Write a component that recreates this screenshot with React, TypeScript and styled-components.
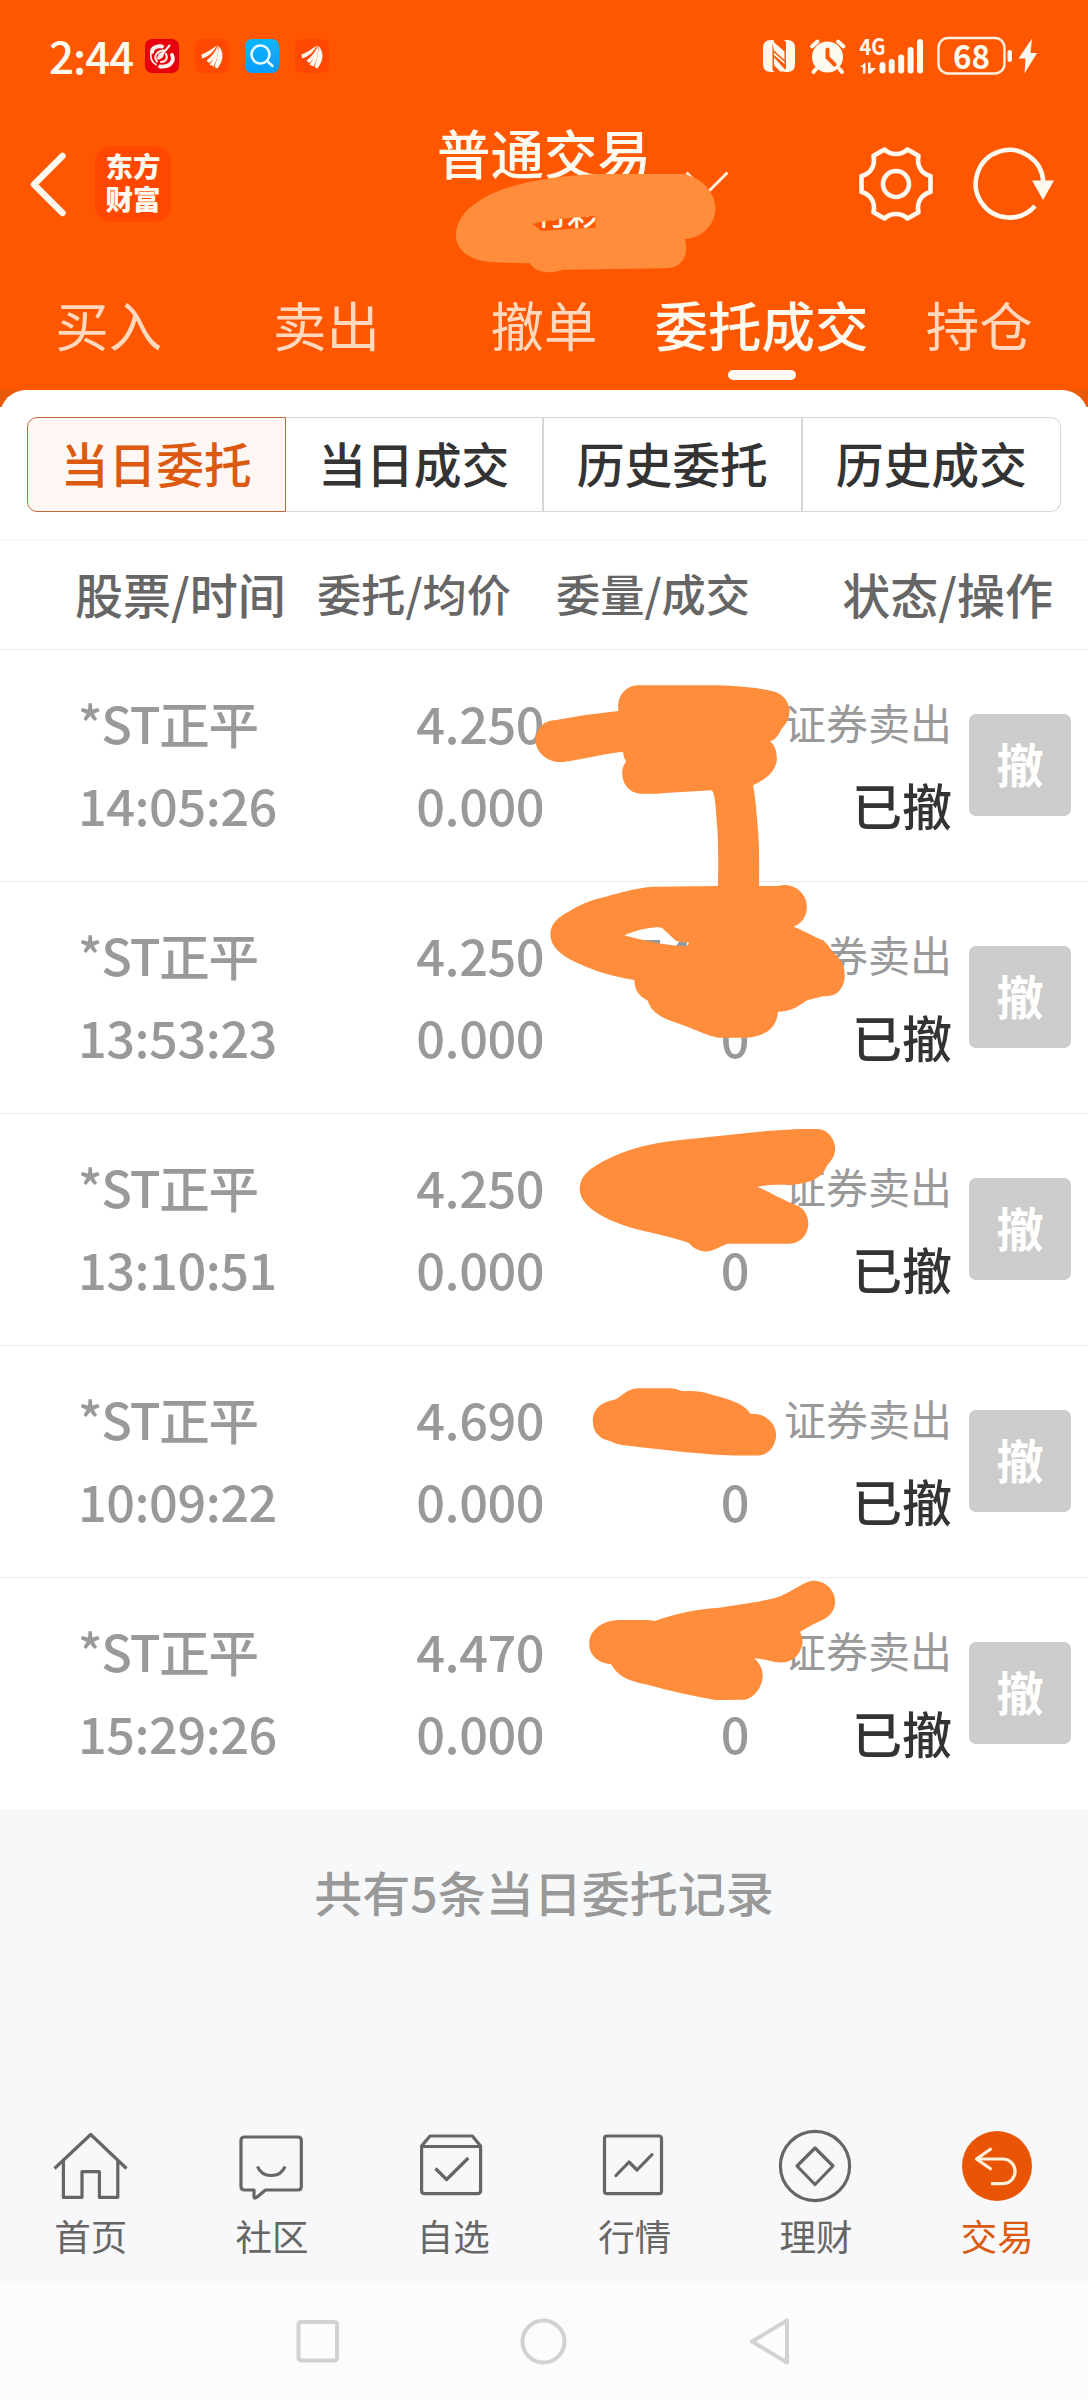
import React from 'react';
import styled, { createGlobalStyle } from 'styled-components';

const GlobalStyle = createGlobalStyle`
  * { box-sizing: border-box; }
  body {
    margin: 0;
    background: #f7f8fa;
    font-family: 'Noto Sans CJK SC', 'Noto Sans', sans-serif;
    font-weight: 400;
  }
`;

const Screen = styled.div`
  position: relative;
  width: 1088px;
  height: 2400px;
  display: flex;
  flex-direction: column;
  overflow: hidden;
  background: #f7f8fa;
`;

const Header = styled.header`
  height: 390px;
  flex: none;
  background: #ff5600;
  color: #fffaf0;
`;

const StatusBar = styled.div`
  height: 112px;
  padding: 0 50px 0 49px;
  display: flex;
  align-items: center;
  justify-content: space-between;
`;

const StatusGroup = styled.div<{ $gap: number }>`
  display: flex;
  align-items: center;
  gap: ${(p) => p.$gap}px;
`;

const Clock = styled.span`
  width: 80px;
  margin-bottom: 3px;
  font-size: 44px;
  line-height: 44px;
  font-weight: 500;
  letter-spacing: -1px;
  white-space: nowrap;
`;

const AppBadge = styled.span<{ $bg: string }>`
  width: 34px;
  height: 34px;
  border-radius: 7px;
  background: ${(p) => p.$bg};
  svg { display: block; }
`;

const TitleBar = styled.div`
  height: 144px;
  padding: 0 34px 0 26px;
  display: grid;
  grid-template-columns: 69px 76px 1fr 76px 38px 82px;
  align-items: center;
`;

const Logo = styled.div`
  width: 76px;
  height: 76px;
  padding-top: 3px;
  border-radius: 16px;
  background: #ff4700;
  font-size: 27.5px;
  font-weight: 900;
  text-align: center;
`;

const LogoLine = styled.div`
  height: 33px;
  line-height: 33px;
`;

const Account = styled.div`
  height: 144px;
  margin-left: 266px;
  display: flex;
  align-items: flex-start;
`;

const AccountText = styled.div`
  width: 214px;
  padding-top: 12px;
  text-align: center;
`;

const AccountTitle = styled.div`
  font-size: 53.5px;
  line-height: 56px;
  font-weight: 500;
  white-space: nowrap;
`;

const AccountName = styled.div`
  padding-left: 46px;
  margin-top: 14px;
  font-size: 30px;
  line-height: 36px;
  font-weight: 500;
`;

const Caret = styled.svg`
  margin: 58px 0 0 34px;
  flex: none;
`;

const Tabs = styled.nav`
  height: 134px;
  display: grid;
  grid-template-columns: repeat(5, 1fr);
`;

const Tab = styled.div<{ $active?: boolean }>`
  display: flex;
  flex-direction: column;
  align-items: center;
  padding-top: 38px;
  font-size: 53.5px;
  line-height: 60px;
  font-weight: ${(p) => (p.$active ? 500 : 400)};
  color: ${(p) => (p.$active ? '#fffaf0' : '#ffd8bd')};
  white-space: nowrap;
  &::after {
    content: '';
    width: 68px;
    height: 10px;
    margin-top: 16px;
    border-radius: 5px;
    background: ${(p) => (p.$active ? '#fffaf2' : 'transparent')};
  }
`;

const PanelBack = styled.div`
  flex: none;
  background: linear-gradient(#e8590a 0 17px, #fff 17px);
`;

const Panel = styled.main`
  background: #fff;
  border-radius: 26px 26px 0 0;
`;

const Segments = styled.div`
  height: 149px;
  padding: 27px 27px 0;
  display: grid;
  grid-template-columns: repeat(4, 1fr);
  grid-auto-rows: 95px;
`;

const Segment = styled.div<{ $active?: boolean }>`
  display: flex;
  align-items: center;
  justify-content: center;
  font-size: 47.8px;
  line-height: 60px;
  padding-bottom: 3px;
  font-weight: 500;
  white-space: nowrap;
  color: ${(p) => (p.$active ? '#db5a10' : '#333')};
  background: ${(p) => (p.$active ? '#fff7f4' : '#fff')};
  border: 1px solid ${(p) => (p.$active ? '#c0693c' : '#d5d8d9')};
  border-left-width: ${(p) => (p.$active ? 1 : 0)}px;
  &:nth-child(2), &:nth-child(3) { border-right-width: 2px; }
  &:first-child { border-radius: 10px 0 0 10px; }
  &:last-child { border-radius: 0 10px 10px 0; }
`;

const TableHead = styled.div`
  height: 111px;
  padding: 0 35px 4px 75px;
  border-top: 1px solid #f5f5f5;
  border-bottom: 1px solid #ededed;
  display: grid;
  grid-template-columns: 242px 239px 1fr auto;
  align-items: center;
  color: #666;
  font-weight: 500;
  white-space: nowrap;
`;

const HeadCell = styled.span<{ $small?: boolean }>`
  font-size: ${(p) => (p.$small ? 44.2 : 48)}px;
  line-height: 60px;
`;

const Row = styled.div`
  height: 232px;
  padding: 0 17px 0 78px;
  border-bottom: 1px solid #ededed;
  display: grid;
  grid-template-columns: 466px 205px 203px 17px 102px;
  align-items: center;
  &:last-child { height: 231px; border-bottom: 0; }
`;

const PairBlock = styled.div`
  display: grid;
  grid-template-columns: 1fr auto;
  grid-auto-rows: 82px;
  align-items: center;
  padding-bottom: 5px;
`;

const Column = styled.div`
  display: grid;
  grid-auto-rows: 82px;
  align-items: center;
  justify-items: end;
  padding-bottom: 5px;
`;

const Value = styled.span<{ $name?: boolean }>`
  font-size: 50.5px;
  line-height: 60px;
  letter-spacing: ${(p) => (p.$name ? -1.2 : -0.5)}px;
  font-weight: 500;
  color: #999;
  white-space: nowrap;
`;

const Side = styled.span`
  font-size: 42px;
  line-height: 60px;
  color: #999;
  white-space: nowrap;
`;

const State = styled.span`
  font-size: 50px;
  line-height: 60px;
  color: #333;
  font-weight: 500;
`;

const CancelButton = styled.button`
  grid-column: 5;
  width: 102px;
  height: 102px;
  margin-bottom: 2px;
  padding: 0 0 4px;
  border: 0;
  border-radius: 7px;
  background: #ccc;
  color: #fff;
  font-family: inherit;
  font-size: 47px;
  line-height: 60px;
  font-weight: 700;
`;

const Summary = styled.p`
  flex: 1;
  margin: 0;
  padding-top: 52px;
  text-align: center;
  font-size: 48px;
  line-height: 60px;
  font-weight: 500;
  color: #999;
`;

const BottomNav = styled.nav`
  height: 176px;
  padding-top: 20px;
  flex: none;
  display: grid;
  grid-template-columns: repeat(6, 1fr);
  background: #f8f8fa;
`;

const NavItem = styled.div<{ $active?: boolean }>`
  display: flex;
  flex-direction: column;
  align-items: center;
  color: ${(p) => (p.$active ? '#db5a10' : '#666')};
  font-size: 36.5px;
  line-height: 44px;
  svg { display: block; margin-bottom: 11px; }
`;

const SystemBar = styled.div`
  height: 117px;
  flex: none;
  display: flex;
  align-items: center;
  justify-content: center;
  gap: 178px;
  background: #fcfcfc;
`;

const Marks = styled.svg`
  position: absolute;
  inset: 0;
  pointer-events: none;
`;

const WingIcon = () => (
  <svg width="34" height="34" viewBox="0 0 34 34" fill="#fff8ee">
    <path d="M6.500 15.500C12 13.500 17 10 22 6.500C19 12 15 17 7 19.500Z" />
    <path d="M11.500 21.500C17 17.500 21 12 22.800 6.500C23.500 13 20 19.500 14 24Z" />
    <path d="M19.500 28C21.500 22 23.800 14 23.500 6.800C29 13 29 21 22.500 29.500Z" />
    <path d="M14.500 25.500C19 19.500 22 13.500 23 8C23.500 15 21.800 21.500 18.500 27.500Z" />
  </svg>
);

const StatusIcons = () => (
  <svg width="276" height="80" viewBox="762 16 276 80" fill="#fffaf0">
    <path d="M771 40h3l-1.500 4v26l2 2h-3.500q-8 0-8-8v-16q0-8 8-8z" />
    <path d="M787.500 72h-3l1.500-4v-26l-2-2h3.500q7.500 0 7.500 8v16q0 8-7.500 8z" />
    <path d="M772 40.500L784.500 51.500V60L774 50.500ZM774 52.500L784.500 62V64L774 55ZM774 57.500L787 71.500H780L774 65Z" />
    <circle cx="827.500" cy="57" r="15.500" />
    <path d="M812 46.500l5.500-5M843.500 46.500l-5.500-5M816 69l-2.500 3M839.500 69l2.500 3" stroke="#fffaf0" strokeWidth="4" strokeLinecap="round" />
    <path d="M827.500 49.500v8l7 7" fill="none" stroke="#ff5600" strokeWidth="4" strokeLinecap="round" />
    <text x="859.500" y="55" fontSize="22" fontWeight="700" textLength="26" lengthAdjust="spacingAndGlyphs">4G</text>
    <path d="M865.500 62.500v11h-2.600v-6.500h-3zM868 62.500h2.600v5.500h5.500l-5.500 5.500h-2.600z" />
    <rect x="879.500" y="62" width="6" height="11.500" rx="3" />
    <rect x="888.700" y="59" width="6" height="14.500" rx="3" />
    <rect x="898.200" y="54.500" width="6" height="19" rx="3" />
    <rect x="907.600" y="47" width="6" height="26.500" rx="3" />
    <rect x="917" y="39" width="6" height="34.500" rx="3" />
    <rect x="938.500" y="38" width="66" height="35.500" rx="9.500" fill="none" stroke="#fff1df" strokeWidth="2.400" />
    <text x="971.500" y="68.500" fontSize="33" fontWeight="700" textAnchor="middle" textLength="37" lengthAdjust="spacingAndGlyphs">68</text>
    <rect x="1007.500" y="50" width="4.500" height="12" rx="2.200" />
    <path d="M1032 38.500L1018.500 58.500H1025.500L1024.500 73.500L1037 53H1030.500Z" />
  </svg>
);

const tabs = ['买入', '卖出', '撤单', '委托成交', '持仓'];
const segments = ['当日委托', '当日成交', '历史委托', '历史成交'];

const orders = [
  { time: '14:05:26', price: '4.250', qty: '', filled: '' },
  { time: '13:53:23', price: '4.250', qty: '5400', filled: '0' },
  { time: '13:10:51', price: '4.250', qty: '', filled: '0' },
  { time: '10:09:22', price: '4.690', qty: '', filled: '0' },
  { time: '15:29:26', price: '4.470', qty: '', filled: '0' },
];

const navItems = [
  {
    label: '首页',
    icon: <path d="M1.500 41.500L37.700 7.500L73.500 41.500M10.400 34V70.300H29V44.700H46.400V70.300H64.800V34" />,
  },
  {
    label: '社区',
    icon: (
      <>
        <path d="M10.500 10H64Q67.300 10 67.300 13.500V59.500Q67.300 63 64 63H31.500L22.500 70.500Q20 72 20 69.500V63H10.500Q7 63 7 59.500V13.500Q7 10 10.500 10Z" />
        <path d="M23.500 39.500Q27 48.500 37.300 48.500Q47.500 48.500 51 39.500" />
      </>
    ),
  },
  {
    label: '自选',
    icon: (
      <>
        <path d="M6.600 19L15 9H57.300L65.600 19V63.500Q65.600 66.700 62.500 66.700H9.700Q6.600 66.700 6.600 63.500ZM6.600 19.500H65.600" />
        <path d="M20.500 41.500L31.600 52.500L53.300 31" />
      </>
    ),
  },
  {
    label: '行情',
    icon: (
      <>
        <rect x="7.500" y="9" width="57" height="57.700" rx="2.500" />
        <path d="M19 48.500L32 35L40 43L55 27.700" strokeLinecap="round" />
      </>
    ),
  },
  {
    label: '理财',
    icon: (
      <>
        <circle cx="37" cy="39" r="34.600" />
        <path d="M37 21L55 39L37 57.500L19 39Z" />
      </>
    ),
  },
  {
    label: '交易',
    icon: (
      <>
        <circle cx="38" cy="39" r="35" fill="#e95504" stroke="none" />
        <path d="M32.500 21.500L17.500 32L32.500 42.500M17.500 32H44.800A12.400 12.400 0 0 1 44.800 56.700H32" stroke="#fff0dc" />
      </>
    ),
  },
];

export default function App() {
  return (
    <Screen>
      <GlobalStyle />
      <Header>
        <StatusBar>
          <StatusGroup $gap={16}>
            <Clock>2:44</Clock>
            <AppBadge $bg="#e9000f">
              <svg width="34" height="34" viewBox="0 0 34 34" fill="none" stroke="#fff3f0" strokeLinecap="round">
                <path d="M17 7.500C11 6.500 7 9.500 7 13" strokeWidth="4" />
                <path d="M6 13C5 19 7 23.500 11 25.500" strokeWidth="1.800" />
                <path d="M27 16C30 22 25 28.500 15 27.500" strokeWidth="3.800" />
                <path d="M12 22.500C7.500 17 13 11 19.500 11.500M24.500 6.500L14 19.500M16 23C21 23 23 19 21 15" strokeWidth="2" />
                <path d="M13 19.500Q14 14 18 14Q18 19 13 19.500Z" strokeWidth="1.800" />
              </svg>
            </AppBadge>
            <AppBadge $bg="#ff4900"><WingIcon /></AppBadge>
            <AppBadge $bg="linear-gradient(#0cb6f8, #069cff)">
              <svg width="34" height="34" viewBox="0 0 34 34" fill="none" stroke="#e6fbff" strokeWidth="2.600" strokeLinecap="round">
                <circle cx="15.500" cy="15.500" r="9" />
                <path d="M22 22L27.500 27" />
              </svg>
            </AppBadge>
            <AppBadge $bg="#ff4900"><WingIcon /></AppBadge>
          </StatusGroup>
          <StatusIcons />
        </StatusBar>
        <TitleBar>
          <svg width="44" height="70" viewBox="0 0 44 70" fill="none" stroke="#fffaf0" strokeWidth="6.500" strokeLinecap="round" strokeLinejoin="round">
            <path d="M36.500 7L8 35.500L36.500 64" />
          </svg>
          <Logo>
            <LogoLine>东方</LogoLine>
            <LogoLine>财富</LogoLine>
          </Logo>
          <Account>
            <AccountText>
              <AccountTitle>普通交易</AccountTitle>
              <AccountName>付彩</AccountName>
            </AccountText>
            <Caret width="44" height="26" viewBox="0 0 44 26" fill="none" stroke="#fff0dc" strokeWidth="3">
              <path d="M1.500 2.500L22 23L42.500 2.500" />
            </Caret>
          </Account>
          <svg width="76" height="76" viewBox="0 0 76 76" fill="none" stroke="#fffaf0" strokeWidth="4.600" strokeLinejoin="round">
            <path d="M26.500 3.500C33 9.500 43 9.500 49.500 3.500L60.500 9.800C58.500 19.500 63 27.500 72.500 30V46C63 48.500 58.500 56.500 60.500 66.200L49.500 72.500C43 66.500 33 66.500 26.500 72.500L15.500 66.200C17.500 56.500 13 48.500 3.500 46V30C13 27.500 17.500 19.500 15.500 9.800Z" />
            <circle cx="38" cy="38" r="13" />
          </svg>
          <span />
          <svg width="82" height="76" viewBox="0 0 82 76">
            <path d="M71.300 36A33.800 33.800 0 1 0 63 60" fill="none" stroke="#fffaf0" strokeWidth="4.600" />
            <path d="M60 34.500H82L71 54Z" fill="#fffaf0" />
          </svg>
        </TitleBar>
        <Tabs>
          {tabs.map((t) => (
            <Tab key={t} $active={t === '委托成交'}>{t}</Tab>
          ))}
        </Tabs>
      </Header>

      <PanelBack>
        <Panel>
          <Segments>
            {segments.map((s, i) => (
              <Segment key={s} $active={i === 0}>{s}</Segment>
            ))}
          </Segments>
          <TableHead>
            <HeadCell>股票/时间</HeadCell>
            <HeadCell $small>委托/均价</HeadCell>
            <HeadCell $small>委量/成交</HeadCell>
            <HeadCell>状态/操作</HeadCell>
          </TableHead>
          <div>
            {orders.map((o) => (
              <Row key={o.time}>
                <PairBlock>
                  <Value $name>*ST正平</Value>
                  <Value>{o.price}</Value>
                  <Value>{o.time}</Value>
                  <Value>0.000</Value>
                </PairBlock>
                <Column>
                  <Value>{o.qty}</Value>
                  <Value>{o.filled}</Value>
                </Column>
                <Column>
                  <Side>证券卖出</Side>
                  <State>已撤</State>
                </Column>
                <CancelButton>撤</CancelButton>
              </Row>
            ))}
          </div>
        </Panel>
      </PanelBack>

      <Summary>共有5条当日委托记录</Summary>

      <BottomNav>
        {navItems.map((n) => (
          <NavItem key={n.label} $active={n.label === '交易'}>
            <svg width="76" height="76" viewBox="0 0 76 76" fill="none" stroke="#666" strokeWidth="3.200" strokeLinejoin="round">
              {n.icon}
            </svg>
            {n.label}
          </NavItem>
        ))}
      </BottomNav>

      <SystemBar>
        <svg width="48" height="50" viewBox="0 0 48 50" fill="none" stroke="#d2d2d2" strokeWidth="4">
          <rect x="4.500" y="5" width="38.500" height="38.500" rx="2.500" />
        </svg>
        <svg width="48" height="50" viewBox="0 0 48 50" fill="none" stroke="#d2d2d2" strokeWidth="4">
          <circle cx="23.500" cy="24.500" r="21" />
        </svg>
        <svg width="48" height="50" viewBox="0 0 48 50" fill="none" stroke="#d2d2d2" strokeWidth="4" strokeLinejoin="round">
          <path d="M41 3.500V45.500L6 24.500Z" />
        </svg>
      </SystemBar>

      <Marks width="1088" height="2400" viewBox="0 0 1088 2400" fill="#ff8d3c" fillRule="evenodd">
        <path
          transform="translate(430 120) scale(0.3333)"
          d="M78 345C78 280 150 225 250 198C350 170 440 164 520 162H760C825 175 857 225 857 270C850 330 800 357 764 357C770 375 768 390 768 395C765 425 740 445 710 445L400 449C345 465 315 455 300 430C250 430 220 428 180 426C110 420 78 385 78 345ZM308 312C350 300 430 292 495 288L497 323L420 326L335 333Z"
        />
        <path
          transform="translate(520 660) scale(0.3623 0.3333)"
          d="M100 180L180 165L272 153C265 110 290 78 325 76L545 76C640 80 680 88 710 98C735 110 748 140 743 165C740 190 720 205 718 215C710 232 700 240 690 244C705 258 709 275 709 300C705 340 670 362 643 376C650 410 652 450 657 510C661 560 660 620 660 678L712 678C750 665 792 695 792 742C790 775 775 792 755 800C790 815 810 830 835 840C850 852 862 875 880 895C898 915 899 950 893 970C880 1010 855 1008 830 1010C810 1016 800 1018 790 1022C760 1046 740 1054 712 1055C710 1100 680 1130 625 1133L550 1133C520 1130 495 1112 410 1080C375 1064 358 1045 353 1022C325 1008 315 985 316 960C260 950 220 940 160 910C115 888 84 860 84 825C84 780 120 765 150 745C180 728 200 720 220 715C300 690 340 681 370 680L546 678C549 600 546 540 545 510C540 440 540 410 530 391L400 399C370 402 350 402 330 401C300 398 282 370 282 340C283 320 288 312 293 304C286 290 285 285 285 275C240 280 180 295 120 306C80 310 43 280 43 240C45 205 65 180 100 180ZM288 826C320 812 350 803 380 802C390 802 395 804 400 812C415 825 422 835 432 843L467 848L459 860C430 858 400 853 380 850C350 843 310 833 288 826Z"
        />
        <g transform="translate(520 1100) scale(0.3623 0.4082)">
          <path d="M165 220C165 185 190 170 230 150C290 122 360 105 430 99L680 76L770 71L820 71C850 72 870 95 870 122C868 145 850 155 845 165C835 190 800 205 750 208C700 207 670 209 655 213C690 225 720 243 770 260C785 268 796 285 796 305C793 335 770 352 742 352L572 352C545 362 530 372 510 371C490 370 475 360 465 350C400 330 350 325 290 308C220 288 165 255 165 220Z" />
          <path d="M201 787C201 750 235 738 265 733C285 722 295 708 325 706L418 706C430 707 437 710 447 713C490 712 510 716 530 722C590 735 622 748 636 769C680 766 707 795 707 822C705 850 685 871 655 871L590 871C500 868 430 860 280 845C260 842 250 836 235 832C215 825 201 810 201 787Z" />
          <path d="M191 1332C191 1300 225 1275 275 1274L350 1274C360 1275 368 1276 374 1276C430 1258 480 1249 550 1244C620 1233 680 1228 720 1215C755 1202 775 1185 805 1178C840 1175 870 1200 870 1230C868 1262 840 1273 820 1280C800 1288 785 1297 773 1303C778 1312 780 1320 780 1330C775 1360 750 1378 720 1378C690 1376 670 1368 646 1368C662 1378 670 1395 670 1412C668 1440 645 1465 620 1469L540 1470C480 1460 420 1450 350 1432C290 1422 265 1405 252 1382C215 1380 191 1360 191 1332Z" />
        </g>
      </Marks>
    </Screen>
  );
}
